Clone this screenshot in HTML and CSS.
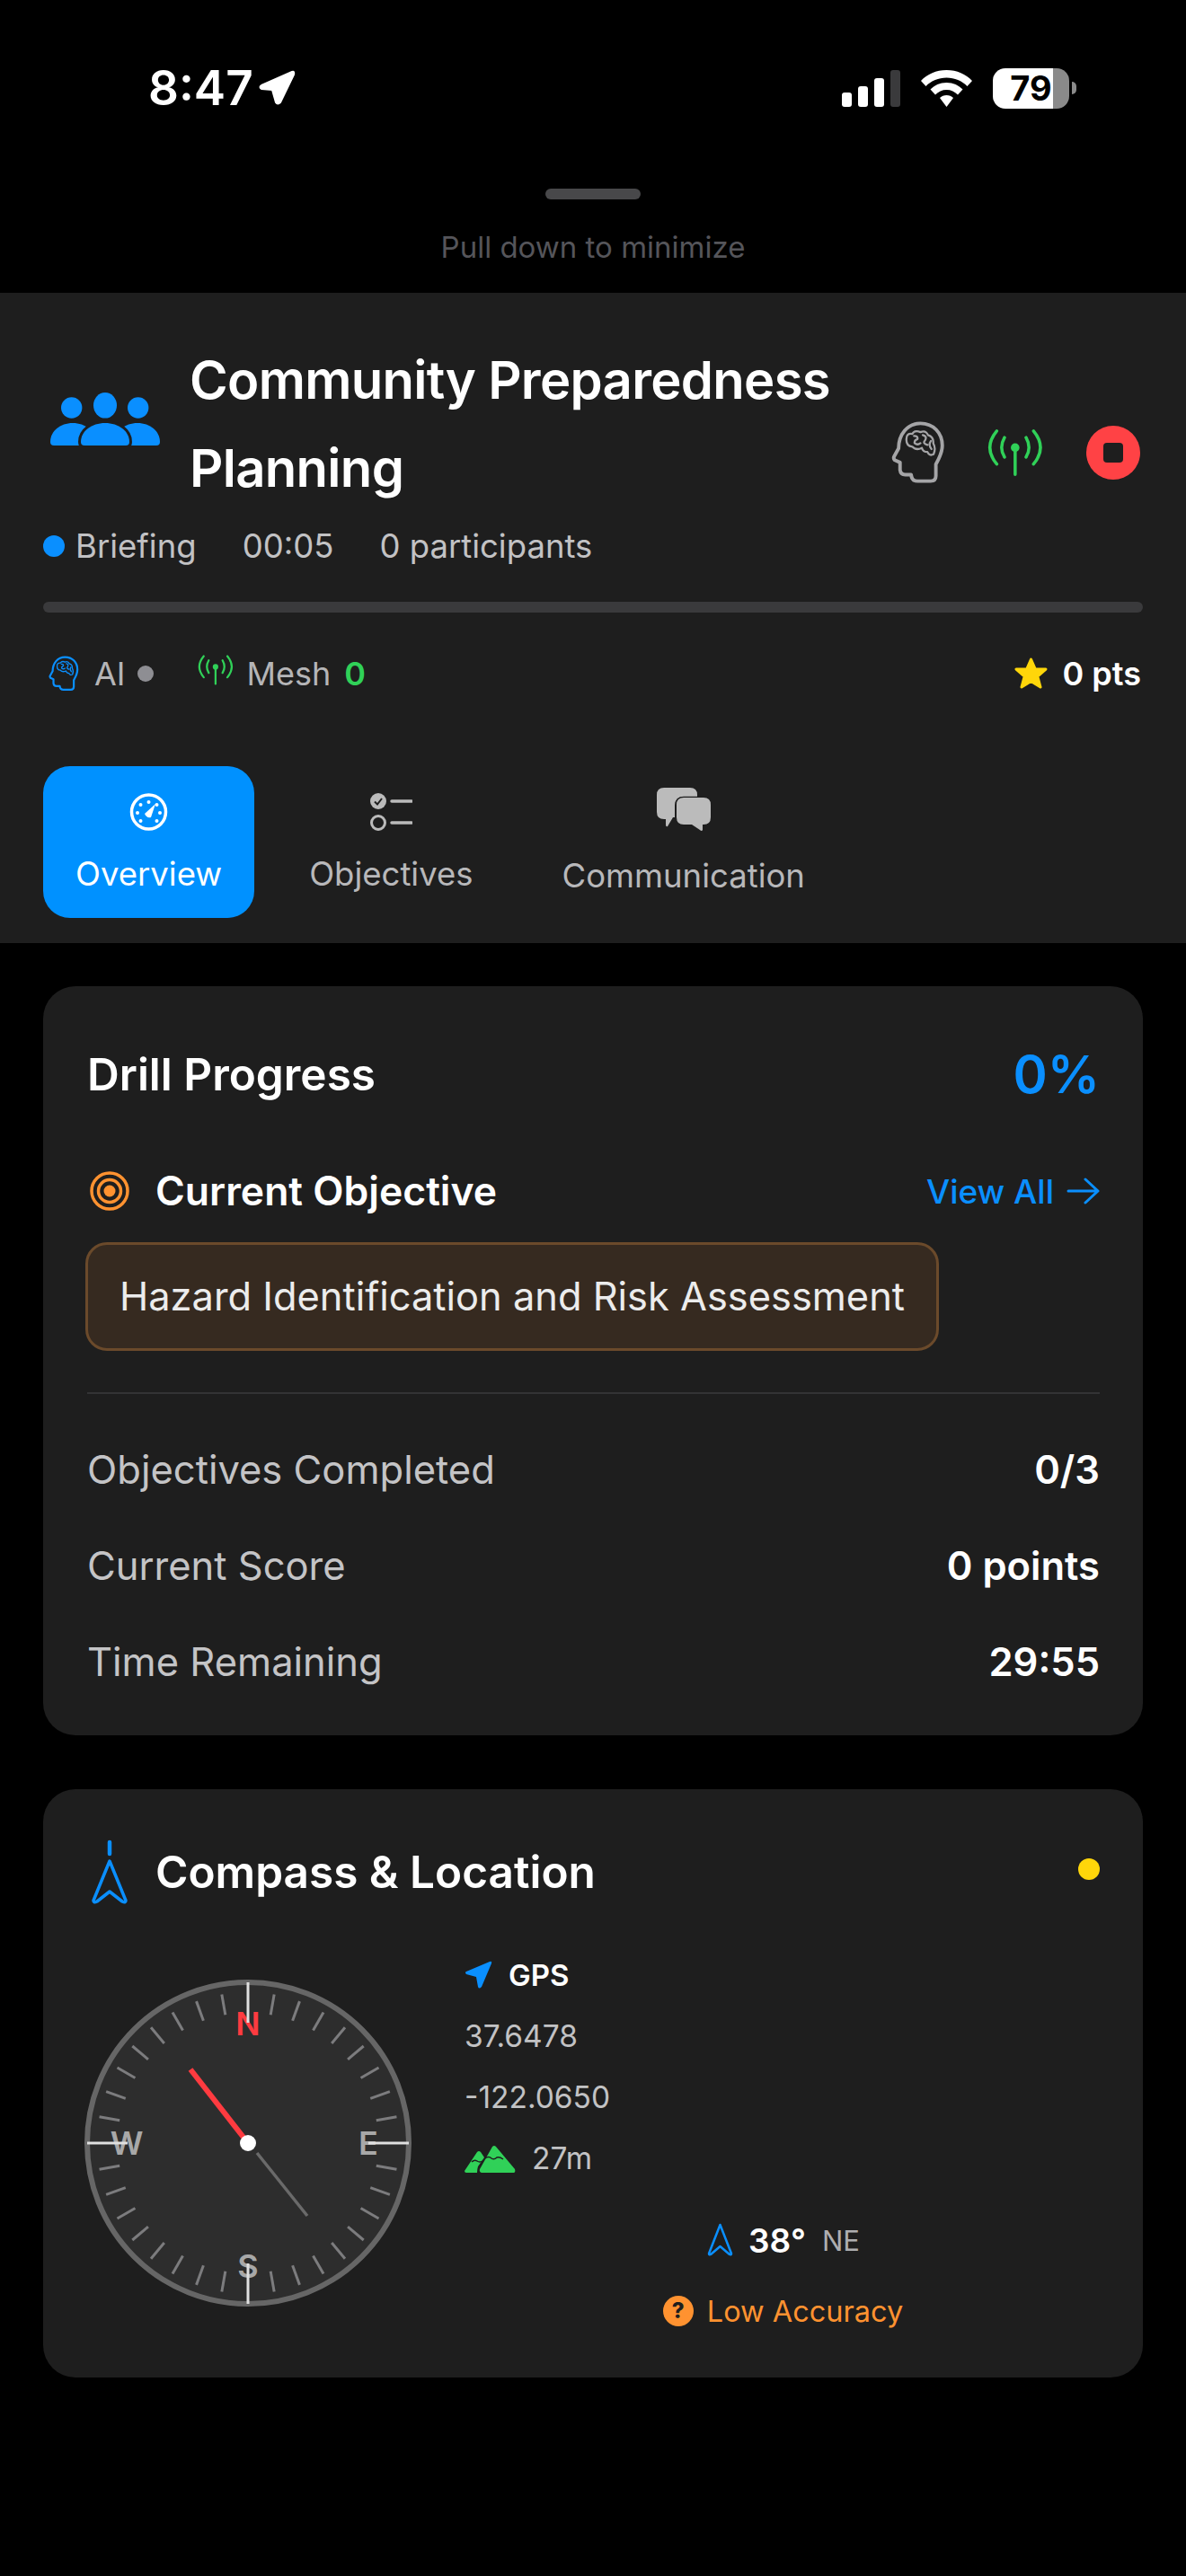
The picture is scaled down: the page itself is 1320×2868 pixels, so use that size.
FILE: index.html
```html
<!DOCTYPE html>
<html lang="en">

<head>
  <meta charset="UTF-8">
  <meta name="viewport" content="width=device-width, initial-scale=1.0">
  <title>Community Preparedness Planning</title>
  <link rel="stylesheet" href="styles.css">
</head>

<body>
  <svg class="defs" width="0" height="0">
    <symbol id="brain" viewBox="60 85 185 215">
      <path class="line-a" d="M160 92C205 92 235 125 235 168C235 195 222 215 213 232V272Q213 290 195 290H150Q130 290 128 268H108Q92 268 90 252V226L72 218Q66 212 70 205L85 178C85 130 115 92 160 92Z" />
      <path class="line-b" d="M112 145Q112 125 132 128Q140 114 160 122Q178 114 186 132Q206 138 204 160Q214 178 205 198Q190 205 184 190Q168 190 165 176Q145 186 132 172Q110 170 112 145Z" />
      <path class="line-b" d="M138 135Q152 134 150 146Q138 150 140 160Q150 168 160 160M168 132Q184 136 176 150Q166 160 184 166M196 152Q186 166 198 180" />
    </symbol>
    <symbol id="antenna" viewBox="380 105 195 175">
      <circle cx="477" cy="175" r="15" fill="currentColor" />
      <path class="line-c" d="M477 175V268M440 140Q420 175 440 208M515 140Q535 175 515 208M413 117Q365 175 413 232M541 117Q589 175 541 232" />
    </symbol>
  </svg>

  <div class="status-bar">
    <div class="status-time">
      <span>8:47</span>
      <svg class="loc-arrow" viewBox="0 0 41 40">
        <path d="M3 17L37 2Q40 1 39 5L24 36Q21 39 19 36L15 22L3 21Q0 19 3 17Z" fill="#fff" stroke="#fff" stroke-width="2" stroke-linejoin="round" />
      </svg>
    </div>
    <div class="status-icons">
      <div class="signal">
        <span class="bar bar-1"></span>
        <span class="bar bar-2"></span>
        <span class="bar bar-3"></span>
        <span class="bar bar-4"></span>
      </div>
      <svg class="wifi" viewBox="0 0 57 41">
        <path d="M28.500 0C40 0 50 4.500 57 12L51.500 18C45.500 12 37.500 8.500 28.500 8.500C19.500 8.500 11.500 12 5.500 18L0 12C7 4.500 17 0 28.500 0Z" fill="#fff" />
        <path d="M28.500 14C36 14 42 17 46.500 21.500L41 27.500C37.500 24 33.500 22 28.500 22C23.500 22 19.500 24 16 27.500L10.500 21.500C15 17 21 14 28.500 14Z" fill="#fff" />
        <path d="M28.500 28C31.500 28 34 29 36 31L28.500 41L21 31C23 29 25.500 28 28.500 28Z" fill="#fff" />
      </svg>
      <div class="battery"><span>79</span></div>
      <span class="battery-tip"></span>
    </div>
  </div>

  <div class="handle">
    <div class="grabber"></div>
    <div class="handle-text">Pull down to minimize</div>
  </div>

  <header class="drill-header">
    <div class="title-row">
      <svg class="people-icon" viewBox="0 0 122 60">
        <circle cx="23.700" cy="17" r="11.700" fill="#0a8fff" />
        <circle cx="97.700" cy="17" r="11.700" fill="#0a8fff" />
        <ellipse cx="61" cy="14.300" rx="13" ry="14.300" fill="#0a8fff" />
        <path d="M0 55C0 43 11 34 25 34C39 34 50 43 50 55V59H4Q0 59 0 55Z" fill="#0a8fff" />
        <path d="M122 55C122 43 111 34 97 34C83 34 72 43 72 55V59H118Q122 59 122 55Z" fill="#0a8fff" />
        <path d="M34 55C34 43 46 34 61 34C76 34 88 43 88 55Q88 59 84 59H38Q34 59 34 55Z" fill="#0a8fff" stroke="#1e1e1e" stroke-width="6" paint-order="stroke" />
      </svg>
      <h1 class="drill-title">Community Preparedness Planning</h1>
      <div class="title-actions">
        <svg class="icon-brain"><use href="#brain" /></svg>
        <svg class="icon-antenna"><use href="#antenna" /></svg>
        <div class="stop-btn"><span></span></div>
      </div>
    </div>

    <div class="meta-row">
      <span class="phase"><i class="phase-dot"></i>Briefing</span>
      <span>00:05</span>
      <span>0 participants</span>
    </div>

    <div class="progress-track"></div>

    <div class="stats-row">
      <svg class="mini-brain"><use href="#brain" /></svg>
      <span class="stat-label">AI</span>
      <i class="ai-dot"></i>
      <svg class="mini-antenna"><use href="#antenna" /></svg>
      <span class="stat-label">Mesh</span>
      <span class="mesh-count">0</span>
      <span class="points">
        <svg class="star" viewBox="0 0 39 38">
          <path d="M19.500 3L24.300 14H36L26.800 22L30 34L19.500 27.500L9 34L12.200 22L3 14H14.700Z" fill="#ffd60a" stroke="#ffd60a" stroke-width="3" stroke-linejoin="round" />
        </svg>
        0 pts
      </span>
    </div>

    <nav class="tabs">
      <div class="tab tab-active">
        <svg class="tab-icon gauge" viewBox="0 0 43 42">
          <circle cx="21.500" cy="21" r="19" fill="none" stroke="#fff" stroke-width="3.500" />
          <circle cx="21.500" cy="10" r="2" fill="#fff" />
          <circle cx="12.500" cy="13" r="2" fill="#fff" />
          <circle cx="30.500" cy="13" r="2" fill="#fff" />
          <circle cx="9" cy="22" r="2" fill="#fff" />
          <circle cx="34" cy="22" r="2" fill="#fff" />
          <circle cx="12.500" cy="31" r="2" fill="#fff" />
          <circle cx="30.500" cy="31" r="2" fill="#fff" />
          <path d="M17 23L29 12L24 27Q19 28 17 23Z" fill="#fff" />
        </svg>
        <span>Overview</span>
      </div>
      <div class="tab">
        <svg class="tab-icon" viewBox="0 0 47 42">
          <circle cx="9" cy="9" r="9" fill="#bbb" />
          <path d="M5 9.500L8 12.500L13 6" fill="none" stroke="#1e1e1e" stroke-width="2" />
          <circle cx="9" cy="33" r="7.500" fill="none" stroke="#bbb" stroke-width="3" />
          <path d="M24 9H46M24 33H46" stroke="#bbb" stroke-width="3.500" stroke-linecap="round" />
        </svg>
        <span>Objectives</span>
      </div>
      <div class="tab tab-comm">
        <svg class="tab-icon-lg" viewBox="0 0 60 48">
          <path d="M8 0H37Q45 0 45 8V10H30Q20 10 20 20V33H18L12 43Q10 44 10 41V35H8Q0 35 0 27V8Q0 0 8 0Z" fill="#bbb" />
          <path d="M30 11H52Q60 11 60 19V33Q60 41 52 41H51V47Q50 49 48 47L39 41H30Q22 41 22 33V19Q22 11 30 11Z" fill="#bbb" stroke="#1e1e1e" stroke-width="2.500" paint-order="stroke" />
        </svg>
        <span>Communication</span>
      </div>
    </nav>
  </header>

  <main class="content">
    <section class="card card-progress">
      <div class="progress-head">
        <h2 class="card-title">Drill Progress</h2>
        <span class="percent">0%</span>
      </div>

      <div class="objective-head">
        <svg class="target" viewBox="0 0 44 44">
          <circle cx="22" cy="22" r="20" fill="none" stroke="#ff9230" stroke-width="3.500" />
          <circle cx="22" cy="22" r="12.500" fill="none" stroke="#ff9230" stroke-width="3.500" />
          <circle cx="22" cy="22" r="6.500" fill="#ff9230" />
        </svg>
        <span class="objective-label">Current Objective</span>
        <a class="view-all">View All
          <svg class="view-arrow" viewBox="0 0 37 30">
            <path d="M2 15H34M21 2L35 15L21 28" fill="none" stroke="#0a8fff" stroke-width="3" stroke-linecap="round" stroke-linejoin="round" />
          </svg>
        </a>
      </div>

      <div class="objective-box">Hazard Identification and Risk Assessment</div>

      <div class="divider"></div>

      <div class="stat-list">
        <div class="stat-line"><span>Objectives Completed</span><b>0/3</b></div>
        <div class="stat-line"><span>Current Score</span><b>0 points</b></div>
        <div class="stat-line"><span>Time Remaining</span><b>29:55</b></div>
      </div>
    </section>

    <section class="card card-compass">
      <div class="compass-head">
        <svg class="compass-glyph" viewBox="0 0 40 72">
          <path d="M20 3V16" stroke="#0a8fff" stroke-width="4.500" stroke-linecap="round" />
          <path d="M20 24L38 68Q38 71 34 69L20 58L6 69Q2 71 2 68Z" fill="none" stroke="#0a8fff" stroke-width="3.500" stroke-linejoin="round" />
        </svg>
        <h2 class="card-title">Compass &amp; Location</h2>
        <i class="accuracy-dot"></i>
      </div>

      <div class="compass-body">
        <svg class="compass" viewBox="-182 -182 364 364">
          <circle r="179" fill="#2d2d2d" stroke="#666" stroke-width="6" />
          <text class="dir dir-n" x="0" y="-120">N</text>
          <text class="dir" x="134" y="13">E</text>
          <text class="dir" x="0" y="150">S</text>
          <text class="dir" x="-135" y="13">W</text>
          <g class="ticks">
            <line y1="-145" y2="-168" transform="rotate(10)" />
            <line y1="-145" y2="-168" transform="rotate(20)" />
            <line y1="-145" y2="-168" transform="rotate(30)" />
            <line y1="-145" y2="-168" transform="rotate(40)" />
            <line y1="-145" y2="-168" transform="rotate(50)" />
            <line y1="-145" y2="-168" transform="rotate(60)" />
            <line y1="-145" y2="-168" transform="rotate(70)" />
            <line y1="-145" y2="-168" transform="rotate(80)" />
            <line y1="-145" y2="-168" transform="rotate(100)" />
            <line y1="-145" y2="-168" transform="rotate(110)" />
            <line y1="-145" y2="-168" transform="rotate(120)" />
            <line y1="-145" y2="-168" transform="rotate(130)" />
            <line y1="-145" y2="-168" transform="rotate(140)" />
            <line y1="-145" y2="-168" transform="rotate(150)" />
            <line y1="-145" y2="-168" transform="rotate(160)" />
            <line y1="-145" y2="-168" transform="rotate(170)" />
            <line y1="-145" y2="-168" transform="rotate(190)" />
            <line y1="-145" y2="-168" transform="rotate(200)" />
            <line y1="-145" y2="-168" transform="rotate(210)" />
            <line y1="-145" y2="-168" transform="rotate(220)" />
            <line y1="-145" y2="-168" transform="rotate(230)" />
            <line y1="-145" y2="-168" transform="rotate(240)" />
            <line y1="-145" y2="-168" transform="rotate(250)" />
            <line y1="-145" y2="-168" transform="rotate(260)" />
            <line y1="-145" y2="-168" transform="rotate(280)" />
            <line y1="-145" y2="-168" transform="rotate(290)" />
            <line y1="-145" y2="-168" transform="rotate(300)" />
            <line y1="-145" y2="-168" transform="rotate(310)" />
            <line y1="-145" y2="-168" transform="rotate(320)" />
            <line y1="-145" y2="-168" transform="rotate(330)" />
            <line y1="-145" y2="-168" transform="rotate(340)" />
            <line y1="-145" y2="-168" transform="rotate(350)" />
          </g>
          <g class="majors">
            <line y1="-134" y2="-179" />
            <line y1="-134" y2="-179" transform="rotate(90)" />
            <line y1="-134" y2="-179" transform="rotate(180)" />
            <line y1="-134" y2="-179" transform="rotate(270)" />
          </g>
          <line class="needle-red" x1="0" y1="0" x2="-64" y2="-82" />
          <line class="needle-gray" x1="10" y1="11" x2="66" y2="81" />
          <circle r="9" fill="#fff" />
        </svg>

        <div class="loc-col">
          <div class="loc-line gps-line">
            <svg class="gps-arrow" viewBox="0 0 31 32">
              <path d="M2 12L28 1Q31 0 30 3L19 29Q16 32 15 29L13 18L2 15Q0 13 2 12Z" fill="#0a8fff" />
            </svg>
            <span>GPS</span>
          </div>
          <div class="loc-line">37.6478</div>
          <div class="loc-line">-122.0650</div>
          <div class="loc-line">
            <svg class="mountain" viewBox="0 0 57 31">
              <path d="M0 29L14 8Q16 6 18 8L22 14L15 24Q14 27 14 31H2Q0 31 0 29Z" fill="#30d158" />
              <path d="M17 27L31 2Q33 0 35 2L56 27Q57 30 55 31H19Q16 30 17 27Z" fill="#30d158" />
              <path d="M8 19Q11 16 14 18Q17 20 20 18M23 15Q27 12 30 15Q33 17 36 14Q39 13 43 16" fill="none" stroke="#1e1e1e" stroke-width="1.500" />
            </svg>
            <span>27m</span>
          </div>
          <div class="heading-line">
            <svg class="heading-arrow" viewBox="0 0 29 38">
              <path d="M14.500 2L27 34Q27 36 25 35L14.500 26L4 35Q2 36 2 34Z" fill="none" stroke="#0a8fff" stroke-width="2.500" stroke-linejoin="round" />
            </svg>
            <b>38°</b>
            <span>NE</span>
          </div>
          <div class="accuracy-line">
            <span class="help-badge">?</span>
            <span>Low Accuracy</span>
          </div>
        </div>
      </div>
    </section>
  </main>
</body>

</html>
```

FILE: styles.css
```css
* {
  box-sizing: border-box;
}

html,
body {
  margin: 0;
  padding: 0;
}

body {
  width: 1320px;
  height: 2868px;
  overflow: hidden;
  background-color: #000;
  color: #fff;
  font-family: Inter, "Noto Sans", sans-serif;
}

.defs {
  position: absolute;
}

.line-a {
  fill: none;
  stroke: currentColor;
  stroke-width: 12;
  stroke-linejoin: round;
}

.line-b {
  fill: none;
  stroke: currentColor;
  stroke-width: 7;
  stroke-linejoin: round;
  stroke-linecap: round;
}

.line-c {
  fill: none;
  stroke: currentColor;
  stroke-width: 11;
  stroke-linecap: round;
}

/* status bar */
.status-bar {
  height: 196px;
  padding: 0 122px 0 165px;
  display: flex;
  align-items: center;
  justify-content: space-between;
}

.status-time {
  display: flex;
  align-items: center;
  gap: 6px;
  font-size: 53px;
  font-weight: 600;
}

.loc-arrow {
  width: 41px;
  height: 40px;
}

.status-icons {
  display: flex;
  align-items: center;
}

.signal {
  display: flex;
  align-items: flex-end;
  gap: 7px;
  height: 41px;
  margin-right: 23px;
}

.bar {
  width: 11px;
  background-color: #fff;
  border-radius: 3px;
}

.bar-1 {
  height: 16px;
}

.bar-2 {
  height: 23px;
}

.bar-3 {
  height: 32px;
}

.bar-4 {
  height: 41px;
  background-color: #3a3a3c;
}

.wifi {
  width: 57px;
  height: 41px;
  margin-right: 23px;
}

.battery {
  width: 85px;
  height: 45px;
  border-radius: 14px;
  background: linear-gradient(to right, #fff 79%, #8a8a8a 79%);
  display: flex;
  align-items: center;
  justify-content: center;
  color: #000;
  font-size: 38px;
  font-weight: 700;
}

.battery-tip {
  width: 5px;
  height: 14px;
  margin-left: 3px;
  background-color: #8a8a8a;
  border-radius: 0 5px 5px 0;
}

/* pull handle */
.handle {
  height: 130px;
  padding-top: 14px;
  display: flex;
  flex-direction: column;
  align-items: center;
}

.grabber {
  width: 106px;
  height: 12px;
  background-color: #48484a;
  border-radius: 6px;
}

.handle-text {
  margin-top: 30px;
  line-height: 46px;
  font-size: 33px;
  color: #55555a;
}

/* header */
.drill-header {
  height: 724px;
  padding: 48px 48px 0;
  background-color: #1e1e1e;
}

.title-row {
  display: flex;
  align-items: center;
  height: 196px;
}

.people-icon {
  width: 122px;
  height: 60px;
  margin: 0 33px 0 8px;
  flex-shrink: 0;
  position: relative;
  top: -5px;
}

.drill-title {
  width: 760px;
  margin: 0;
  font-size: 58px;
  line-height: 98px;
  font-weight: 600;
  letter-spacing: -0.7px;
}

.title-actions {
  margin-left: auto;
  align-self: flex-end;
  display: flex;
  align-items: center;
  margin-bottom: 31px;
  margin-right: 3px;
}

.icon-brain {
  width: 60px;
  height: 70px;
  color: #a5a5a7;
}

.icon-antenna {
  width: 64px;
  height: 56px;
  margin-left: 46px;
  color: #30d158;
}

.stop-btn {
  width: 60px;
  height: 60px;
  margin-left: 47px;
  background-color: #ff4245;
  border-radius: 50%;
  display: flex;
  align-items: center;
  justify-content: center;
}

.stop-btn span {
  width: 22px;
  height: 22px;
  border-radius: 4px;
  background-color: #1e1e1e;
}

.meta-row {
  margin-top: 16px;
  display: flex;
  gap: 51px;
  height: 44px;
  align-items: center;
  font-size: 36.500px;
  color: #c2c2c4;
}

.phase {
  display: flex;
  align-items: center;
}

.phase-dot {
  width: 24px;
  height: 24px;
  margin-right: 12px;
  border-radius: 50%;
  background-color: #0a8fff;
}

.progress-track {
  height: 12px;
  margin-top: 40px;
  border-radius: 6px;
  background-color: #3a3a3c;
}

.stats-row {
  height: 44px;
  margin-top: 46px;
  display: flex;
  align-items: center;
  font-size: 36px;
}

.mini-brain {
  width: 34px;
  height: 44px;
  margin-left: 6px;
  color: #0a8fff;
}

.stat-label {
  margin-left: 17px;
  color: #b5b5b7;
}

.ai-dot {
  width: 18px;
  height: 18px;
  margin-left: 13px;
  border-radius: 50%;
  background-color: #8e8e93;
}

.mini-antenna {
  width: 40px;
  height: 36px;
  margin-left: 49px;
  position: relative;
  top: -4px;
  color: #30d158;
}

.mini-antenna + .stat-label {
  margin-left: 15px;
}

.mesh-count {
  margin-left: 15px;
  color: #30d158;
  font-weight: 600;
}

.points {
  margin-left: auto;
  margin-right: 2px;
  display: flex;
  align-items: center;
  gap: 16px;
  font-weight: 600;
}

.star {
  width: 39px;
  height: 38px;
}

.tabs {
  display: flex;
  align-items: flex-start;
  gap: 25px;
  margin-top: 81px;
}

.tab {
  height: 169px;
  padding: 30px 36px 0;
  display: flex;
  flex-direction: column;
  align-items: center;
  gap: 28px;
  border-radius: 30px;
  font-size: 36.500px;
  line-height: 44px;
  color: #b8b8ba;
}

.tab-active {
  background-color: #0091ff;
  color: #fff;
}

.tab-comm {
  margin-left: 2px;
  padding-top: 24px;
}

.tab-icon {
  width: 47px;
  height: 42px;
  margin-bottom: -2px;
}

.gauge {
  width: 43px;
}

.tab-icon-lg {
  width: 60px;
  height: 48px;
}

/* cards */
.content {
  padding: 48px 48px 0;
  display: flex;
  flex-direction: column;
  gap: 60px;
}

.card {
  background-color: #1e1e1e;
  border-radius: 36px;
  padding: 48px 48px 0 49px;
}

.card-progress {
  height: 834px;
}

.card-compass {
  height: 655px;
}

.progress-head {
  height: 100px;
  display: flex;
  align-items: center;
  justify-content: space-between;
}

.card-title {
  margin: 0;
  font-size: 49.500px;
  font-weight: 600;
}

.percent {
  font-size: 58px;
  font-weight: 600;
  color: #0a8fff;
}

.objective-head {
  height: 60px;
  margin-top: 50px;
  display: flex;
  align-items: center;
}

.target {
  width: 44px;
  height: 44px;
  margin-left: 3px;
}

.objective-label {
  margin-left: 29px;
  font-size: 44.500px;
  font-weight: 600;
}

.view-all {
  margin-left: auto;
  display: flex;
  align-items: center;
  gap: 14px;
  font-size: 37px;
  font-weight: 500;
  color: #0a8fff;
}

.view-arrow {
  width: 37px;
  height: 30px;
}

.objective-box {
  display: table;
  height: 121px;
  margin: 27px 0 0 -2px;
  padding: 0 35px;
  line-height: 115px;
  font-size: 43.400px;
  color: #ececec;
  background-color: #362a20;
  border: 3px solid #6b4a2b;
  border-radius: 24px;
}

.divider {
  height: 2px;
  margin-top: 46px;
  background-color: #333335;
}

.stat-list {
  margin-top: 54px;
  display: flex;
  flex-direction: column;
  gap: 47px;
}

.stat-line {
  height: 60px;
  display: flex;
  align-items: center;
  justify-content: space-between;
  font-size: 43.500px;
  color: #c4c4c6;
}

.stat-line b {
  font-weight: 600;
  color: #fff;
}

.compass-head {
  height: 88px;
  display: flex;
  align-items: center;
}

.compass-glyph {
  width: 40px;
  height: 72px;
  margin-left: 5px;
}

.compass-head .card-title {
  margin-left: 31px;
}

.accuracy-dot {
  width: 24px;
  height: 24px;
  margin-left: auto;
  position: relative;
  top: -3px;
  border-radius: 50%;
  background-color: #ffd60a;
}

.compass-body {
  height: 416px;
  margin-top: 50px;
  display: flex;
  align-items: center;
}

.compass {
  width: 364px;
  height: 364px;
  margin-left: -3px;
  flex-shrink: 0;
}

.dir {
  font-size: 36px;
  font-weight: 600;
  text-anchor: middle;
  fill: #a8a8a8;
}

.dir-n {
  fill: #ff3b40;
}

.ticks line {
  stroke: #7c7c7e;
  stroke-width: 3;
}

.majors line {
  stroke: #e0e0e0;
  stroke-width: 3;
}

.needle-red {
  stroke: #ff3b40;
  stroke-width: 6;
}

.needle-gray {
  stroke: #6a6a6a;
  stroke-width: 3.500;
}

.loc-col {
  flex: 1;
  margin-left: 59px;
  display: flex;
  flex-direction: column;
  gap: 24px;
  font-size: 33.500px;
  color: #c2c2c4;
}

.loc-line {
  height: 44px;
  display: flex;
  align-items: center;
  gap: 18px;
}

.gps-line {
  color: #fff;
  font-size: 33px;
  font-weight: 600;
}

.gps-arrow {
  width: 31px;
  height: 32px;
}

.mountain {
  width: 57px;
  height: 31px;
}

.heading-line {
  height: 44px;
  margin-top: 23px;
  padding-left: 3px;
  display: flex;
  align-items: center;
  justify-content: center;
  font-size: 31px;
  color: #aeaeb0;
}

.heading-arrow {
  width: 29px;
  height: 38px;
  margin-right: 17px;
}

.heading-line b {
  margin-right: 18px;
  font-size: 37px;
  font-weight: 600;
  color: #fff;
}

.accuracy-line {
  height: 44px;
  margin-top: 11px;
  padding-left: 2px;
  display: flex;
  align-items: center;
  justify-content: center;
  gap: 15px;
  font-size: 32.500px;
  color: #ff9230;
}

.help-badge {
  width: 34px;
  height: 34px;
  border-radius: 50%;
  background-color: #ff9230;
  color: #1e1e1e;
  font-size: 24px;
  font-weight: 800;
  line-height: 34px;
  text-align: center;
}
```
